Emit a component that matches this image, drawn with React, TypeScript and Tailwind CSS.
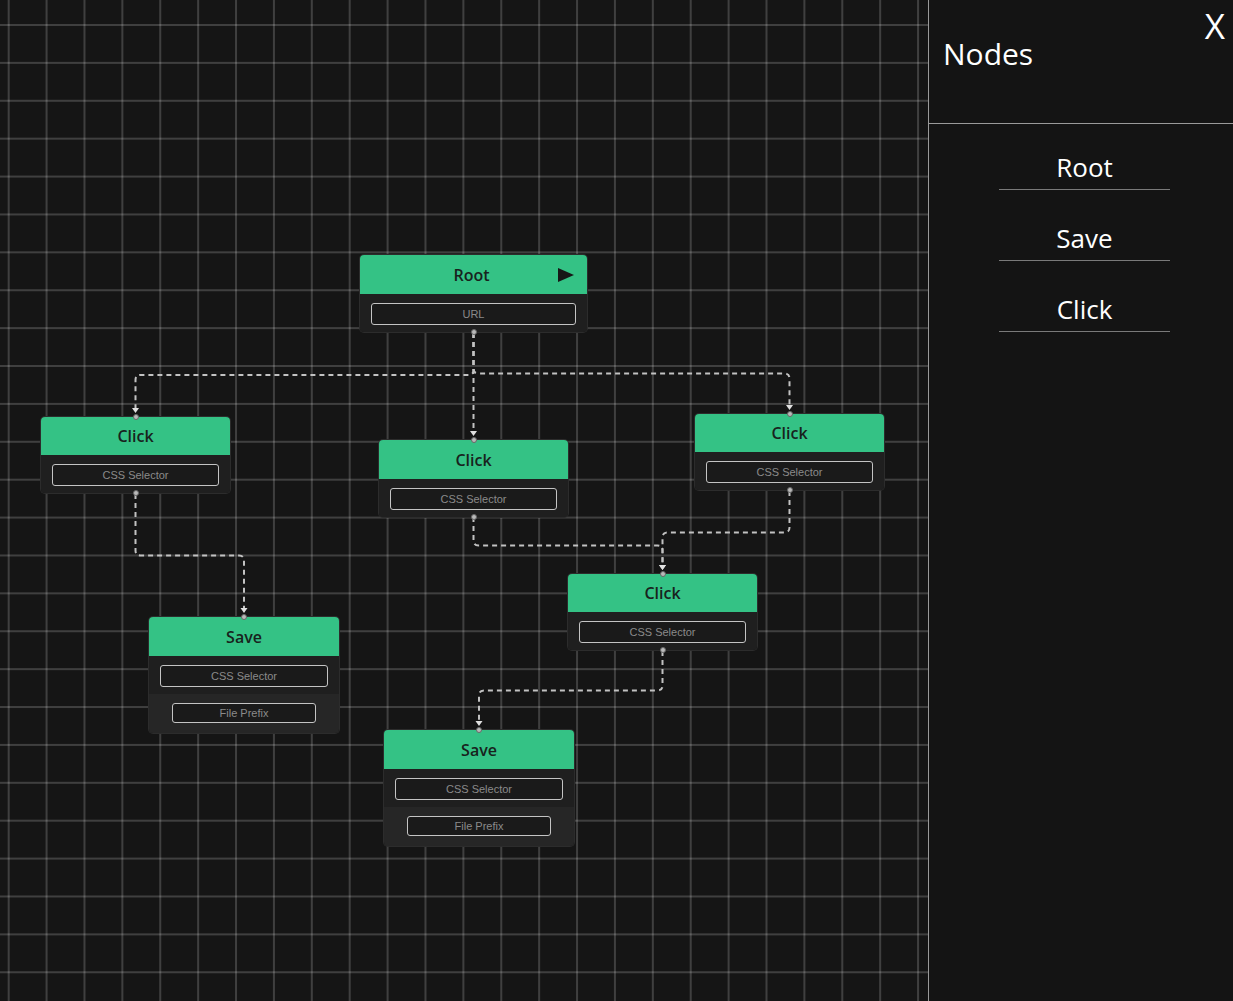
import React from "react";

type NodeDef = {
  id: string;
  title: string;
  x: number;
  y: number;
  w: number;
  headerH: number;
  kind: "root" | "click" | "save";
};

const nodes: NodeDef[] = [
  { id: "root", title: "Root", x: 360, y: 255, w: 227, headerH: 39, kind: "root" },
  { id: "cl", title: "Click", x: 41, y: 417, w: 189, headerH: 38, kind: "click" },
  { id: "cm", title: "Click", x: 379, y: 440, w: 189, headerH: 39, kind: "click" },
  { id: "cr", title: "Click", x: 695, y: 414, w: 189, headerH: 38, kind: "click" },
  { id: "clow", title: "Click", x: 568, y: 574, w: 189, headerH: 38, kind: "click" },
  { id: "sl", title: "Save", x: 149, y: 617, w: 190, headerH: 39, kind: "save" },
  { id: "slow", title: "Save", x: 384, y: 730, w: 190, headerH: 39, kind: "save" },
];

const edges: [number, number, number, number][] = [
  [473.5, 333, 135.5, 417],
  [473.5, 333, 473.5, 440],
  [473.5, 333, 789.5, 414],
  [135.5, 494, 244, 617],
  [473.5, 517, 662.5, 574],
  [789.5, 491, 662.5, 574],
  [662.5, 651, 479, 730],
];

function edgePath(sx: number, sy: number, tx: number, ty: number) {
  const end = ty - 6;
  if (Math.abs(sx - tx) < 1) return `M ${sx} ${sy} L ${tx} ${end}`;
  const my = (sy + ty) / 2;
  const r = 5;
  const dir = tx > sx ? 1 : -1;
  return `M ${sx} ${sy} L ${sx} ${my - r} Q ${sx} ${my} ${sx + dir * r} ${my} L ${tx - dir * r} ${my} Q ${tx} ${my} ${tx} ${my + r} L ${tx} ${end}`;
}

function Field({ label, className }: { label: string; className: string }) {
  return (
    <div
      className={`flex items-center justify-center rounded-[3px] border border-[#c4c4c4] bg-[#1a1a1a] text-[11px] text-[#8a8a8a] ${className}`}
      style={{ fontFamily: '"Liberation Sans", Arial, sans-serif' }}
    >
      {label}
    </div>
  );
}

function FlowNode({ n }: { n: NodeDef }) {
  return (
    <div
      className="absolute rounded-[4px] shadow-[0_0_0_1px_#2c2c2c]"
      style={{ left: n.x, top: n.y, width: n.w }}
    >
      <div
        className="relative flex items-center justify-center rounded-t-[4px] bg-[#34c285] text-[16px] font-semibold text-[#18221d]"
        style={{ height: n.headerH, fontFamily: '"Open Sans", sans-serif' }}
      >
        <span className={n.kind === "root" ? "-ml-[4px]" : ""}>{n.title}</span>
        {n.kind === "root" && (
          <svg className="absolute right-[13px] top-[13px]" width="16" height="14" viewBox="0 0 16 14">
            <polygon points="0,0 16,7 0,14" fill="#171717" />
          </svg>
        )}
      </div>
      <div className={`bg-[#1f1f1f] px-[11px] pt-[9px] pb-[7px] ${n.kind === "save" ? "" : "rounded-b-[4px]"}`}>
        <Field label={n.kind === "root" ? "URL" : "CSS Selector"} className="h-[22px] w-full" />
      </div>
      {n.kind === "save" && (
        <div className="flex justify-center rounded-b-[4px] bg-[#262626] pt-[9px] pb-[10px]">
          <Field label="File Prefix" className="h-[20px] w-[144px]" />
        </div>
      )}
      {n.kind !== "root" && (
        <div className="absolute left-1/2 top-[-3px] h-[6px] w-[6px] -translate-x-1/2 rounded-full border border-[#666] bg-[#b9b9b9]" />
      )}
      {n.kind !== "save" && (
        <div className="absolute bottom-[-3px] left-1/2 h-[6px] w-[6px] -translate-x-1/2 rounded-full border border-[#666] bg-[#b9b9b9]" />
      )}
    </div>
  );
}

export default function App() {
  return (
    <div className="flex h-[1001px] w-[1233px] overflow-hidden bg-[#151515]">
      <div className="relative h-full w-[928px] bg-[#151515] bg-[image:linear-gradient(to_right,rgba(255,255,255,0.18)_2px,transparent_2px),linear-gradient(to_bottom,rgba(255,255,255,0.18)_2px,transparent_2px)] bg-[length:37.9px_37.9px] bg-[position:7.7px_24px]">
        <svg className="absolute left-0 top-0" width="928" height="1001">
          {edges.map(([sx, sy, tx, ty], i) => (
            <path
              key={i}
              d={edgePath(sx, sy, tx, ty)}
              fill="none"
              stroke="#c2c2c2"
              strokeWidth="2"
              strokeDasharray="5 4"
            />
          ))}
        </svg>
        {nodes.map((n) => (
          <FlowNode key={n.id} n={n} />
        ))}
        <svg className="pointer-events-none absolute left-0 top-0" width="928" height="1001">
          {edges.map(([, , tx, ty], i) => (
            <polygon key={i} points={`${tx - 3.5},${ty - 9} ${tx + 3.5},${ty - 9} ${tx},${ty - 4}`} fill="#e0e0e0" />
          ))}
        </svg>
      </div>
      <div
        className="flex h-full flex-1 flex-col border-l border-[#9a9a9a] bg-[#141414] text-white"
        style={{ fontFamily: '"Open Sans", sans-serif' }}
      >
        <div className="relative h-[124px] border-b border-[#9a9a9a] pl-[14px] pt-[33px]">
          <div className="text-[30px] leading-[41px]">Nodes</div>
          <div className="absolute right-[8px] top-[2px] text-[35px] leading-[48px]">X</div>
        </div>
        <div className="flex flex-col gap-[31px] pt-[26px]">
          {["Root", "Save", "Click"].map((t) => (
            <div
              key={t}
              className="ml-[70px] w-[171px] border-b border-[#7a7a7a] pb-[4px] text-center text-[26px] leading-[35px]"
            >
              {t}
            </div>
          ))}
        </div>
      </div>
    </div>
  );
}
